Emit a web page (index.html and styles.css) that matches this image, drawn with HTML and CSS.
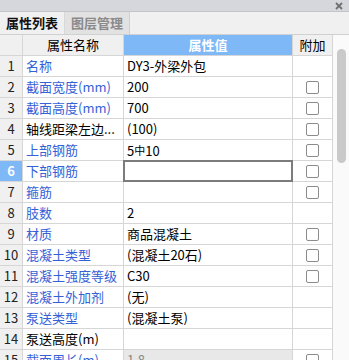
FILE: index.html
```html
<!DOCTYPE html>
<html lang="zh-CN">
<head>
  <meta charset="UTF-8" />
  <meta name="viewport" content="width=device-width, initial-scale=1.0" />
  <title>属性列表</title>
  <link rel="stylesheet" href="styles.css">
</head>
<body>
  <div class="titlebar">
    <svg class="close" width="8" height="8" viewBox="0 0 8 8">
      <path d="M1 1L7 7M7 1L1 7" stroke="#707070" stroke-width="1.8" />
    </svg>
  </div>

  <div class="tabs">
    <div class="tab active">属性列表</div>
    <div class="tab">图层管理</div>
  </div>

  <div class="panel">
    <div class="grid">
      <div class="row head">
        <div class="cell num"></div>
        <div class="cell name">属性名称</div>
        <div class="cell value">属性值</div>
        <div class="cell extra">附加</div>
      </div>

      <div class="row">
        <div class="cell num">1</div>
        <div class="cell name blue">名称</div>
        <div class="cell value">DY3-外梁外包</div>
        <div class="cell extra"></div>
      </div>
      <div class="row">
        <div class="cell num">2</div>
        <div class="cell name blue">截面宽度(mm)</div>
        <div class="cell value">200</div>
        <div class="cell extra"><span class="check"></span></div>
      </div>
      <div class="row">
        <div class="cell num">3</div>
        <div class="cell name blue">截面高度(mm)</div>
        <div class="cell value">700</div>
        <div class="cell extra"><span class="check"></span></div>
      </div>
      <div class="row">
        <div class="cell num">4</div>
        <div class="cell name">轴线距梁左边...</div>
        <div class="cell value">(100)</div>
        <div class="cell extra"><span class="check"></span></div>
      </div>
      <div class="row">
        <div class="cell num">5</div>
        <div class="cell name blue">上部钢筋</div>
        <div class="cell value">5<span class="bar">中</span>10</div>
        <div class="cell extra"><span class="check"></span></div>
      </div>
      <div class="row current">
        <div class="cell num">6</div>
        <div class="cell name blue">下部钢筋</div>
        <div class="cell value edit"></div>
        <div class="cell extra"><span class="check"></span></div>
      </div>
      <div class="row">
        <div class="cell num">7</div>
        <div class="cell name blue">箍筋</div>
        <div class="cell value"></div>
        <div class="cell extra"><span class="check"></span></div>
      </div>
      <div class="row">
        <div class="cell num">8</div>
        <div class="cell name blue">肢数</div>
        <div class="cell value">2</div>
        <div class="cell extra"></div>
      </div>
      <div class="row">
        <div class="cell num">9</div>
        <div class="cell name blue">材质</div>
        <div class="cell value">商品混凝土</div>
        <div class="cell extra"><span class="check"></span></div>
      </div>
      <div class="row">
        <div class="cell num">10</div>
        <div class="cell name blue">混凝土类型</div>
        <div class="cell value">(混凝土20石)</div>
        <div class="cell extra"><span class="check"></span></div>
      </div>
      <div class="row">
        <div class="cell num">11</div>
        <div class="cell name blue">混凝土强度等级</div>
        <div class="cell value">C30</div>
        <div class="cell extra"><span class="check"></span></div>
      </div>
      <div class="row">
        <div class="cell num">12</div>
        <div class="cell name blue">混凝土外加剂</div>
        <div class="cell value">(无)</div>
        <div class="cell extra"></div>
      </div>
      <div class="row">
        <div class="cell num">13</div>
        <div class="cell name blue">泵送类型</div>
        <div class="cell value">(混凝土泵)</div>
        <div class="cell extra"></div>
      </div>
      <div class="row">
        <div class="cell num">14</div>
        <div class="cell name">泵送高度(m)</div>
        <div class="cell value"></div>
        <div class="cell extra"></div>
      </div>
      <div class="row">
        <div class="cell num">15</div>
        <div class="cell name blue">截面周长(m)</div>
        <div class="cell value readonly">1.8</div>
        <div class="cell extra"><span class="check"></span></div>
      </div>
    </div>

    <div class="scrollbar">
      <div class="thumb"></div>
    </div>
  </div>
</body>
</html>
```

FILE: styles.css
```css
html, body {
  margin: 0;
  padding: 0;
  height: 360px;
  overflow: hidden;
}

body {
  font-family: "Noto Sans CJK SC", "Noto Sans", sans-serif;
  font-size: 13px;
  color: #000;
  background: #fff;
}

.titlebar {
  height: 11px;
  background: #d6d7dc;
  border-bottom: 1px solid #c4c5ca;
  display: flex;
  justify-content: flex-end;
  align-items: center;
  padding-right: 6px;
}

.tabs {
  height: 22px;
  background: #f0f0f0;
  display: flex;
}

.tab {
  width: 65px;
  line-height: 22px;
  text-align: center;
  color: #8a8a8a;
  font-weight: bold;
  background: #e2e2e2;
  border-right: 1px solid #d0d0d0;
  box-sizing: border-box;
}

.tab.active {
  color: #111;
  background: #f0f0f0;
  border-right: 1px solid #d8d8d8;
}

.panel {
  display: flex;
  border-top: 1px solid #d0d0d0;
}

.grid {
  width: 333px;
}

.row {
  display: flex;
  height: 21px;
  border-bottom: 1px solid #d6d6d6;
  box-sizing: border-box;
}

.cell {
  border-right: 1px solid #d6d6d6;
  line-height: 20px;
  white-space: nowrap;
  overflow: hidden;
  box-sizing: border-box;
}

.num {
  width: 23px;
  text-align: center;
  background: #f0f0f0;
  color: #222;
}

.name {
  width: 101px;
  padding-left: 3px;
}

.value {
  width: 169px;
  padding-left: 3px;
}

.extra {
  width: 40px;
  display: flex;
  justify-content: center;
  align-items: center;
}

.head {
  background: #f0f0f0;
}

.head .name {
  text-align: center;
  padding-left: 0;
}

.head .value {
  background: #7fb8f7;
  color: #fff;
  font-weight: bold;
  text-align: center;
  padding-left: 0;
}

.blue {
  color: #3561d6;
}

.bar {
  font-size: 11px;
  vertical-align: 1px;
}

.check {
  width: 11px;
  height: 11px;
  border: 1px solid #8c8c8c;
  border-radius: 2px;
  background: #fff;
}

.current .num {
  background: #7fb8f7;
  color: #fff;
  font-weight: bold;
}

.edit {
  border: 2px solid #7c7c7c;
  margin-left: -1px;
  margin-top: -1px;
  height: 22px;
  width: 170px;
}

.readonly {
  background: #e8e8e8;
  color: #888;
}

.scrollbar {
  width: 16px;
  height: 330px;
  background: #fafafa;
  position: relative;
}

.thumb {
  position: absolute;
  left: 4px;
  top: 14px;
  width: 9px;
  height: 114px;
  border-radius: 5px;
  background: #c9c9c9;
}
```
